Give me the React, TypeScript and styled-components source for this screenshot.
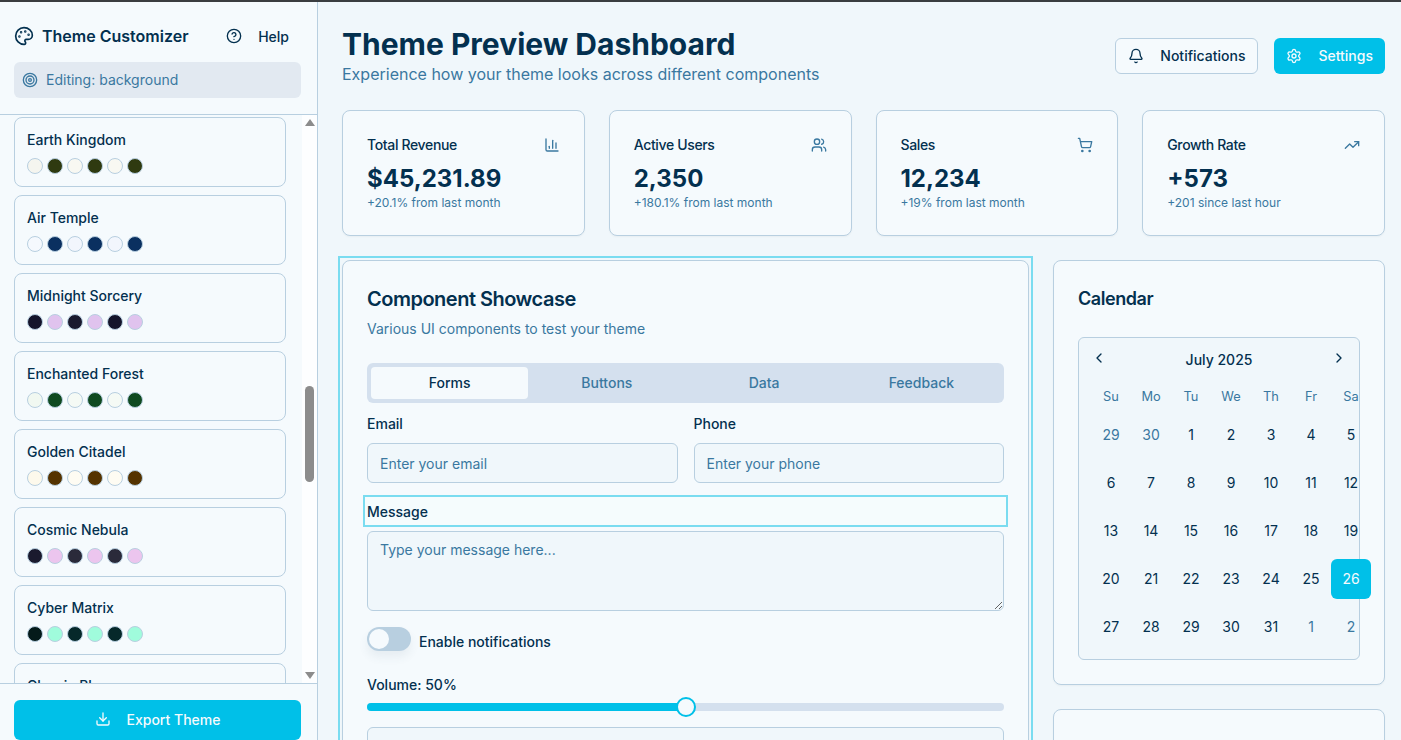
import React from "react";
import styled, { createGlobalStyle } from "styled-components";
import {
  Palette, CircleHelp, Target, Download, ChartColumn, Users, ShoppingCart,
  TrendingUp, Bell, Settings, ChevronLeft, ChevronRight,
} from "lucide-react";

const Global = createGlobalStyle`
  html, body { margin: 0; padding: 0; height: 740px; overflow: hidden; }
  body { font-family: Inter, "Liberation Sans", sans-serif; color: #03304f; background: #f0f7fb; }
  * { box-sizing: border-box; }
  #root { height: 740px; }
`;

const Shell = styled.div`
  height: 740px; display: flex; flex-direction: column; border-top: 2px solid #3a3d40; overflow: hidden;
`;
const Columns = styled.div`flex: 1; min-height: 0; display: flex;`;
const Sidebar = styled.aside`
  width: 318px; flex: none; display: flex; flex-direction: column; background: #f5fafd; border-right: 1px solid #b8cfe0;
`;
const SideHead = styled.div`
  height: 113px; flex: none; padding: 16px 14px 0; border-bottom: 1px solid #b8cfe0;
`;
const SideTop = styled.div`display: flex; align-items: center; height: 36px;`;
const SideTitle = styled.h2`
  margin: 0 0 0 8px; font-size: 16px; line-height: 24px; font-weight: 600; flex: 1; color: #03304f;
`;
const HelpBtn = styled.button`
  border: 0; background: none; font: 500 14px Inter, sans-serif; color: #03304f; display: flex; align-items: center; gap: 16px; padding: 0 14px 0 0; margin: 0;
`;
const Editing = styled.div`
  margin-top: 8px; height: 36px; width: 287px; border-radius: 6px; background: #e2e9f1; display: flex; align-items: center; gap: 8px; padding: 0 8px 2px; font-size: 14px; color: #3a78a0;
  svg { margin-top: 2px; }
`;
const ListWrap = styled.div`flex: 1; min-height: 0; display: flex;`;
const List = styled.div`
  flex: 1; min-width: 0; overflow: hidden; padding: 2px 16px 0 14px; display: flex; flex-direction: column; gap: 8px;
`;
const ThemeCard = styled.div`
  flex: none; height: 70px; border: 1px solid #b8cfe0; border-radius: 8px; padding: 12px; background: #f5fafd;
`;
const ThemeName = styled.div`font-size: 14px; font-weight: 500; line-height: 20px; color: #03304f;`;
const Swatches = styled.div`display: flex; gap: 4px; margin-top: 8px;`;
const Swatch = styled.span<{ $c: string }>`
  width: 16px; height: 16px; border-radius: 50%; border: 1px solid #b8cfe0; background: ${(p) => p.$c};
`;
const Track = styled.div`
  width: 15px; flex: none; background: #fdfeff; display: flex; flex-direction: column; align-items: center; position: relative; padding-top: 271px;
`;
const Thumb = styled.div`width: 9px; height: 96px; border-radius: 5px; background: #8c8c8c;`;
const Arrow = styled.span<{ $down?: boolean }>`
  position: absolute; left: 3px; width: 0; height: 0; border-left: 5px solid transparent; border-right: 5px solid transparent;
  ${(p) => (p.$down
    ? "bottom: 4px; border-top: 7px solid #8c8c8c;"
    : "top: 4px; border-bottom: 7px solid #8c8c8c;")}
`;
const SideFoot = styled.div`
  flex: none; height: 57px; border-top: 1px solid #b8cfe0; padding: 16px 16px 0 14px; overflow: hidden;
`;
const ExportBtn = styled.button`
  width: 287px; height: 40px; border: 0; border-radius: 6px; background: #00c0e8; color: #f5fafd; font: 500 14px Inter, sans-serif; display: flex; align-items: center; justify-content: center; gap: 16px; padding: 0 0 2px;
`;

const Main = styled.main`flex: 1; min-width: 0; overflow: hidden; padding: 24px 16px 0 24px;`;
const Header = styled.header`display: flex; justify-content: space-between; align-items: center; height: 60px;`;
const H1 = styled.h1`margin: 0; font-size: 30px; line-height: 36px; font-weight: 700; color: #03304f;`;
const Sub = styled.p`margin: 0; font-size: 16px; line-height: 24px; color: #3a78a0;`;
const Actions = styled.div`display: flex; gap: 16px; align-items: center;`;
const Btn = styled.button<{ $primary?: boolean }>`
  height: 36px; border-radius: 6px; padding: 0 12px 2px; display: flex; align-items: center; gap: 16px; font: 500 14px Inter, sans-serif;
  border: ${(p) => (p.$primary ? "0" : "1px solid #b8cfe0")};
  background: ${(p) => (p.$primary ? "#00c0e8" : "#f5fafd")};
  color: ${(p) => (p.$primary ? "#f5fafd" : "#03304f")};
  svg { margin-top: 2px; }
`;
const Stats = styled.section`display: grid; grid-template-columns: repeat(4, 1fr); gap: 24px; margin-top: 24px;`;
const Card = styled.div`background: #f5fafd; border: 1px solid #b8cfe0; border-radius: 8px; box-shadow: 0 1px 2px rgba(0,0,0,.04);`;
const Stat = styled(Card)`height: 126px; padding: 24px;`;
const StatTop = styled.div`display: flex; justify-content: space-between; align-items: center; height: 20px;`;
const StatLabel = styled.span`font-size: 14px; font-weight: 500; letter-spacing: -0.35px; color: #03304f; margin-top: -2px;`;
const StatValue = styled.div`font-size: 24px; line-height: 32px; font-weight: 700; margin-top: 8px; color: #03304f;`;
const StatSub = styled.div`font-size: 12px; line-height: 16px; color: #3a78a0;`;
const Grid = styled.section`display: grid; grid-template-columns: repeat(3, 1fr); gap: 24px; margin-top: 24px; align-items: start;`;
const ShowcaseFrame = styled.div`grid-column: span 2; outline: 2px solid #7adcf0; outline-offset: 2px;`;
const Showcase = styled(Card)`padding: 24px;`;
const CardTitle = styled.h3<{ $small?: boolean }>`
  margin: 0; line-height: 28px; font-weight: 600; color: #03304f;
  font-size: ${(p) => (p.$small ? "18px" : "20px")};
  letter-spacing: ${(p) => (p.$small ? "-0.45px" : "-0.5px")};
`;
const CardDesc = styled.p`margin: 6px 0 0; font-size: 14px; line-height: 20px; color: #3a78a0;`;
const Tabs = styled.div`margin-top: 24px; height: 40px; padding: 4px; border-radius: 6px; background: #d4e0ee; display: grid; grid-template-columns: repeat(4, 1fr);`;
const Tab = styled.div<{ $on?: boolean }>`
  display: flex; align-items: center; justify-content: center; border-radius: 4px; font-size: 14px; font-weight: 500; padding-bottom: 2px;
  color: ${(p) => (p.$on ? "#03304f" : "#3a78a0")};
  background: ${(p) => (p.$on ? "#f5fafd" : "transparent")};
`;
const TwoCols = styled.div`display: grid; grid-template-columns: 1fr 1fr; gap: 16px; margin-top: 12px;`;
const Field = styled.div`display: flex; flex-direction: column; gap: 11px;`;
const Label = styled.label`font-size: 14px; line-height: 17px; font-weight: 500; color: #03304f; display: block;`;
const Input = styled.input`
  height: 40px; width: 100%; border: 1px solid #b8cfe0; border-radius: 6px; background: #f0f7fb; padding: 0 12px; font: 14px Inter, sans-serif;
  &::placeholder { color: #3a78a0; opacity: 1; }
`;
const MessageLabel = styled(Label)`
  margin-top: 16px; height: 24px; line-height: 25px; outline: 2px solid #7adcf0; outline-offset: 2px; background: #f5fcfd;
  box-shadow: 0 0 0 2px #f5fcfd;
`;
const TextArea = styled.textarea`
  display: block; margin-top: 8px; height: 80px; width: 100%; border: 1px solid #b8cfe0; border-radius: 6px; background: #f0f7fb; padding: 8px 12px; font: 14px/20px Inter, sans-serif; resize: vertical;
  &::placeholder { color: #3a78a0; opacity: 1; }
`;
const SwitchRow = styled.div`display: flex; align-items: center; gap: 8px; margin-top: 16px; height: 24px;`;
const SwitchTrack = styled.div`
  width: 44px; height: 24px; border-radius: 12px; background: #b8cfe0; padding: 2px; box-shadow: 0 6px 10px rgba(60,90,120,.08);
`;
const Knob = styled.div`width: 20px; height: 20px; border-radius: 50%; background: #f5fafd;`;
const SwitchText = styled.span`font-size: 14px; font-weight: 500; color: #03304f; margin-top: 4px;`;
const VolumeLabel = styled(Label)`margin-top: 24px; line-height: 19px;`;
const Slider = styled.div`position: relative; height: 8px; margin-top: 9px; border-radius: 4px; background: #d4e0ee;`;
const SliderFill = styled.div`height: 8px; border-radius: 4px; background: #00c0e8;`;
const SliderThumb = styled.div`
  position: absolute; top: -6px; width: 20px; height: 20px; margin-left: -10px; border-radius: 50%; background: #f5fafd; border: 2px solid #00c0e8;
`;
const SelectBox = styled.div`margin-top: 16px; height: 40px; border: 1px solid #b8cfe0; border-radius: 6px; background: #f0f7fb;`;
const SideCol = styled.div`display: flex; flex-direction: column; gap: 24px;`;
const CalCard = styled(Card)`height: 425px; padding: 24px;`;
const CalBox = styled.div`
  margin-top: 24px; width: 282px; height: 323px; border: 1px solid #b8cfe0; border-radius: 6px; background: #f0f7fb; padding: 12px;
`;
const CalHead = styled.div`display: flex; justify-content: space-between; align-items: flex-start; height: 40px; color: #03304f;`;
const CalMonth = styled.span`font-size: 14px; font-weight: 500; line-height: 20px;`;
const CalNav = styled.span`width: 16px; height: 16px; display: flex;`;
const Weeks = styled.div`display: grid; grid-template-columns: repeat(7, 40px); width: 280px; margin-top: -4px;`;
const WeekDay = styled.div`height: 20px; display: flex; align-items: center; justify-content: center; font-size: 12.8px; color: #3a78a0;`;
const Day = styled.div<{ $muted?: boolean; $sel?: boolean }>`
  width: 40px; height: 40px; margin: 4px 0; padding-bottom: 2px; display: flex; align-items: center; justify-content: center; font-size: 14px; border-radius: 6px;
  color: ${(p) => (p.$sel ? "#f5fafd" : p.$muted ? "#3a78a0" : "#03304f")};
  background: ${(p) => (p.$sel ? "#00c0e8" : "transparent")};
`;
const DayRows = styled.div`display: grid; grid-template-columns: repeat(7, 40px); width: 280px; margin-top: 5px;`;
const NextCard = styled(Card)`height: 200px;`;

const themes: [string, string[]][] = [
  ["Earth Kingdom", ["#f5f5ef", "#2f3a10", "#f8f8f2", "#2f3a10", "#f8f8f2", "#2f3a10"]],
  ["Air Temple", ["#f5f9fe", "#0a3060", "#f2f6fd", "#0a3060", "#f2f6fd", "#0a3060"]],
  ["Midnight Sorcery", ["#14142b", "#e0c3ee", "#1a1a2e", "#e0c3ee", "#14142b", "#e0c3ee"]],
  ["Enchanted Forest", ["#f1f8f1", "#0f4a20", "#f5faf5", "#0f4a20", "#f5faf5", "#0f4a20"]],
  ["Golden Citadel", ["#fdf9ec", "#553300", "#fefcf3", "#553300", "#fefcf3", "#553300"]],
  ["Cosmic Nebula", ["#1a1a2e", "#ecc5ee", "#2a2a3a", "#ecc5ee", "#2a2a3a", "#ecc5ee"]],
  ["Cyber Matrix", ["#041a1a", "#a0fcdc", "#06282a", "#a0fcdc", "#06282a", "#a0fcdc"]],
  ["Classic Blue", ["#f5f9fe", "#0a3060", "#f2f6fd", "#0a3060", "#f2f6fd", "#0a3060"]],
];
const stats = [
  ["Total Revenue", "$45,231.89", "+20.1% from last month", ChartColumn],
  ["Active Users", "2,350", "+180.1% from last month", Users],
  ["Sales", "12,234", "+19% from last month", ShoppingCart],
  ["Growth Rate", "+573", "+201 since last hour", TrendingUp],
] as const;
const days: [number, boolean][] = [
  [29, true], [30, true],
  ...Array.from({ length: 31 }, (_, i): [number, boolean] => [i + 1, false]),
  [1, true], [2, true],
];

export default function App() {
  return (
    <>
      <Global />
      <Shell>
        <Columns>
          <Sidebar>
            <SideHead>
              <SideTop>
                <Palette size={20} color="#03304f" />
                <SideTitle>Theme Customizer</SideTitle>
                <HelpBtn><CircleHelp size={16} />Help</HelpBtn>
              </SideTop>
              <Editing><Target size={16} />Editing: background</Editing>
            </SideHead>
            <ListWrap>
              <List>
                {themes.map(([name, colors]) => (
                  <ThemeCard key={name}>
                    <ThemeName>{name}</ThemeName>
                    <Swatches>
                      {colors.map((c, i) => <Swatch key={i} $c={c} />)}
                    </Swatches>
                  </ThemeCard>
                ))}
              </List>
              <Track>
                <Arrow />
                <Thumb />
                <Arrow $down />
              </Track>
            </ListWrap>
            <SideFoot>
              <ExportBtn><Download size={16} />Export Theme</ExportBtn>
            </SideFoot>
          </Sidebar>
          <Main>
            <Header>
              <div>
                <H1>Theme Preview Dashboard</H1>
                <Sub>Experience how your theme looks across different components</Sub>
              </div>
              <Actions>
                <Btn><Bell size={16} />Notifications</Btn>
                <Btn $primary><Settings size={16} />Settings</Btn>
              </Actions>
            </Header>
            <Stats>
              {stats.map(([label, value, sub, Icon]) => (
                <Stat key={label}>
                  <StatTop>
                    <StatLabel>{label}</StatLabel>
                    <Icon size={16} color="#3a78a0" />
                  </StatTop>
                  <StatValue>{value}</StatValue>
                  <StatSub>{sub}</StatSub>
                </Stat>
              ))}
            </Stats>
            <Grid>
              <ShowcaseFrame>
                <Showcase>
                  <CardTitle>Component Showcase</CardTitle>
                  <CardDesc>Various UI components to test your theme</CardDesc>
                  <Tabs>
                    <Tab $on>Forms</Tab>
                    <Tab>Buttons</Tab>
                    <Tab>Data</Tab>
                    <Tab>Feedback</Tab>
                  </Tabs>
                  <TwoCols>
                    <Field><Label>Email</Label><Input placeholder="Enter your email" /></Field>
                    <Field><Label>Phone</Label><Input placeholder="Enter your phone" /></Field>
                  </TwoCols>
                  <MessageLabel>Message</MessageLabel>
                  <TextArea placeholder="Type your message here..." />
                  <SwitchRow>
                    <SwitchTrack><Knob /></SwitchTrack>
                    <SwitchText>Enable notifications</SwitchText>
                  </SwitchRow>
                  <VolumeLabel>Volume: 50%</VolumeLabel>
                  <Slider>
                    <SliderFill style={{ width: "50%" }} />
                    <SliderThumb style={{ left: "50%" }} />
                  </Slider>
                  <SelectBox />
                </Showcase>
              </ShowcaseFrame>
              <SideCol>
                <CalCard>
                  <CardTitle $small>Calendar</CardTitle>
                  <CalBox>
                    <CalHead>
                      <CalNav><ChevronLeft size={16} /></CalNav>
                      <CalMonth>July 2025</CalMonth>
                      <CalNav><ChevronRight size={16} /></CalNav>
                    </CalHead>
                    <Weeks>
                      {["Su", "Mo", "Tu", "We", "Th", "Fr", "Sa"].map((d) => <WeekDay key={d}>{d}</WeekDay>)}
                    </Weeks>
                    <DayRows>
                      {days.map(([d, m], i) => <Day key={i} $muted={m} $sel={d === 26}>{d}</Day>)}
                    </DayRows>
                  </CalBox>
                </CalCard>
                <NextCard />
              </SideCol>
            </Grid>
          </Main>
        </Columns>
      </Shell>
    </>
  );
}
